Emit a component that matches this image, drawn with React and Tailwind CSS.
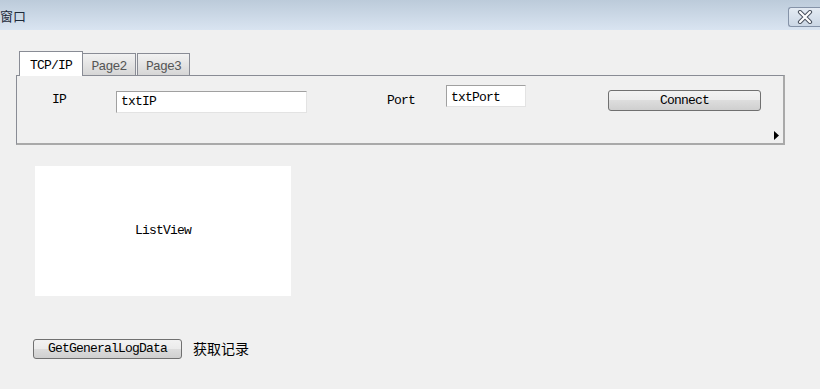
import React from 'react'

const TXT = "font-['Liberation_Mono','DejaVu_Sans_Mono',monospace] text-[13px] tracking-[-0.8px]"

function WinButton({ children, className = '' }) {
  return (
    <div className={`flex items-center justify-center rounded-[3px] border border-[#707070] bg-[linear-gradient(to_bottom,#f2f2f2_0%,#ebebeb_50%,#dddddd_50%,#cfcfcf_100%)] text-black ${TXT} ${className}`}>
      {children}
    </div>
  )
}

function TextBox({ value, className = '' }) {
  return (
    <div className={`flex bg-white border border-t-[#a0a0a0] border-l-[#a0a0a0] border-r-[#e3e3e3] border-b-[#e3e3e3] pl-[4px] text-black ${TXT} ${className}`}>
      {value}
    </div>
  )
}

export default function App() {
  return (
    <div className="w-[820px] h-[389px] bg-[#f0f0f0] overflow-hidden text-black">
      {/* Title bar */}
      <div className="h-[30px] flex items-start justify-between bg-[linear-gradient(to_bottom,#bccbda,#d9e4f1)]">
        <div className="mt-[8px] text-[13px] leading-[15px] text-[#1e2a3a] font-['Noto_Sans_CJK_SC',sans-serif]">窗口</div>
        <div className="mt-[7px] w-[32px] h-[20px] rounded-l-[3px] border border-r-0 border-[#8593a8] bg-[linear-gradient(to_bottom,#e4ebf3,#cbd7e5)] flex items-center justify-center">
          <svg width="16" height="14" viewBox="0 0 16 14">
            <path d="M3 2 L13 12 M13 2 L3 12" stroke="#4b5360" strokeWidth="4.2" strokeLinecap="round" />
            <path d="M3 2 L13 12 M13 2 L3 12" stroke="#ffffff" strokeWidth="2.2" strokeLinecap="round" />
          </svg>
        </div>
      </div>

      {/* Tab control */}
      <div className="ml-[16px] mt-[21px] w-[769px]">
        <div className="flex items-end pl-[3px] h-[24px]">
          <div className={`relative z-10 w-[64px] h-[25px] -mb-[1px] bg-white border border-b-0 border-[#898c95] flex items-start justify-center pt-[4px] ${TXT}`}>
            TCP/IP
          </div>
          <div className={`w-[53px] h-[22px] border border-b-0 border-[#898c95] border-l-0 bg-[linear-gradient(to_bottom,#f2f2f2,#d6d6d6)] flex items-start justify-center pt-[3px] text-[#555] ${TXT}`}>
            Page2
          </div>
          <div className={`ml-[1px] w-[53px] h-[22px] border border-b-0 border-[#898c95] bg-[linear-gradient(to_bottom,#f2f2f2,#d6d6d6)] flex items-start justify-center pt-[3px] text-[#555] ${TXT}`}>
            Page3
          </div>
        </div>
        <div className="h-[70px] border border-[#898c95] border-r-2 border-b-2 border-r-[#a9a9a9] border-b-[#a9a9a9] bg-[#f0f0f0] flex flex-col">
          <div className="flex items-start h-[54px] pl-[35px]">
            <div className={`w-[64px] mt-[16px] leading-[15px] ${TXT}`}>IP</div>
            <TextBox value="txtIP" className="mt-[15px] w-[191px] h-[22px] items-center" />
            <div className={`ml-[80px] w-[59px] mt-[17px] leading-[15px] ${TXT}`}>Port</div>
            <TextBox value="txtPort" className="mt-[9px] w-[80px] h-[22px] items-start pt-[2px]" />
            <WinButton className="ml-[82px] mt-[14px] w-[153px] h-[21px]">Connect</WinButton>
          </div>
          <div className="flex justify-end pr-[3px]">
            <svg width="6" height="9" viewBox="0 0 6 9" className="mt-[1px]">
              <path d="M0 0 L5 4.5 L0 9 Z" fill="#000" />
            </svg>
          </div>
        </div>
      </div>

      {/* ListView */}
      <div className={`ml-[35px] mt-[21px] w-[256px] h-[130px] bg-white flex items-center justify-center ${TXT}`}>
        ListView
      </div>

      {/* Bottom row */}
      <div className="ml-[33px] mt-[42px] flex items-center">
        <WinButton className="w-[149px] h-[20px]">GetGeneralLogData</WinButton>
        <div className="ml-[11px] text-[14px] font-['Noto_Sans_CJK_SC',sans-serif]">获取记录</div>
      </div>
    </div>
  )
}
